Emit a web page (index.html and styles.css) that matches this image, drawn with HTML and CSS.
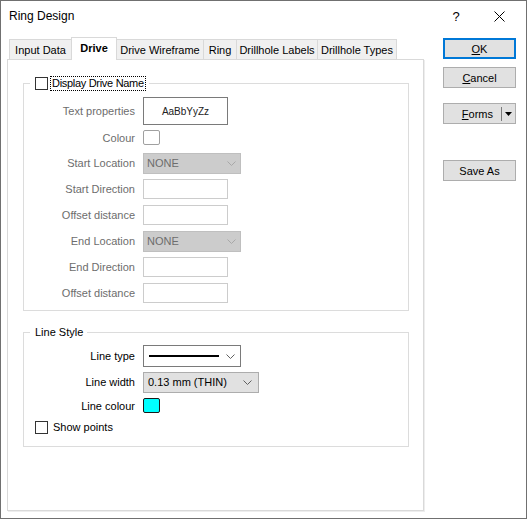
FILE: index.html
```html
<!DOCTYPE html>
<html>
<head>
<meta charset="utf-8">
<title>Ring Design</title>
<link rel="stylesheet" href="styles.css">
</head>
<body>
<div class="window">
  <div class="titlebar">
    <span class="title">Ring Design</span>
    <span class="cap help">?</span>
    <span class="cap close"><svg width="11" height="11" viewBox="0 0 11 11"><path d="M0.5 0.5L10.5 10.5M10.5 0.5L0.5 10.5" stroke="#000" stroke-width="1" fill="none"/></svg></span>
  </div>
  <div class="main">
    <div class="left">
      <div class="tabs">
        <div class="tab w1">Input Data</div>
        <div class="tab w2 active">Drive</div>
        <div class="tab w3">Drive Wireframe</div>
        <div class="tab w4">Ring</div>
        <div class="tab w5">Drillhole Labels</div>
        <div class="tab w6">Drillhole Types</div>
      </div>
      <div class="panel">
        <fieldset class="group g1">
          <legend><span class="legend-in"><span class="cb"></span><span class="focus">Display Drive Name</span></span></legend>
          <div class="form f1">
            <span class="lbl dis">Text properties</span>
            <span class="textprop">AaBbYyZz</span>
            <span class="lbl dis">Colour</span>
            <span class="swatch"></span>
            <span class="lbl dis">Start Location</span>
            <span class="sel-dis">NONE<svg class="chev" width="9" height="5" viewBox="0 0 9 5"><path d="M0.5 0.5L4.5 4.5L8.5 0.5" fill="none" stroke="#a8a8a8"/></svg></span>
            <span class="lbl dis">Start Direction</span>
            <span class="text-dis"></span>
            <span class="lbl dis">Offset distance</span>
            <span class="text-dis"></span>
            <span class="lbl dis">End Location</span>
            <span class="sel-dis">NONE<svg class="chev" width="9" height="5" viewBox="0 0 9 5"><path d="M0.5 0.5L4.5 4.5L8.5 0.5" fill="none" stroke="#a8a8a8"/></svg></span>
            <span class="lbl dis">End Direction</span>
            <span class="text-dis"></span>
            <span class="lbl dis">Offset distance</span>
            <span class="text-dis"></span>
          </div>
        </fieldset>
        <fieldset class="group g2">
          <legend><span class="legend-txt">Line Style</span></legend>
          <div class="form f2">
            <span class="lbl">Line type</span>
            <span class="sel-line"><span class="line"></span><svg class="chev" width="9" height="5" viewBox="0 0 9 5"><path d="M0.5 0.5L4.5 4.5L8.5 0.5" fill="none" stroke="#606060"/></svg></span>
            <span class="lbl">Line width</span>
            <span class="sel-width">0.13 mm (THIN)<svg class="chev" width="9" height="5" viewBox="0 0 9 5"><path d="M0.5 0.5L4.5 4.5L8.5 0.5" fill="none" stroke="#606060"/></svg></span>
            <span class="lbl">Line colour</span>
            <span class="swatch cyan"></span>
            <span class="check-row"><span class="cb"></span><span>Show points</span></span>
          </div>
        </fieldset>
      </div>
    </div>
    <div class="buttons">
      <div class="btn ok"><span><u>O</u>K</span></div>
      <div class="btn cancel"><span><u>C</u>ancel</span></div>
      <div class="btn forms"><span class="forms-lbl"><u>F</u>orms</span><span class="sep"></span><span class="arrow"><svg width="7" height="4" viewBox="0 0 7 4"><path d="M0 0H7L3.5 4Z" fill="#000"/></svg></span></div>
      <div class="btn saveas"><span>Save As</span></div>
    </div>
  </div>
</div>
</body>
</html>
```
FILE: styles.css
```css
* { box-sizing: border-box; }
html, body { margin: 0; padding: 0; background: #fff; }
body {
  font-family: "Liberation Sans", Arial, sans-serif;
  font-size: 11px;
  color: #000;
}
.window {
  width: 527px;
  height: 519px;
  border: 1px solid #707070;
  background: #fff;
}
.titlebar {
  height: 30px;
  display: flex;
  align-items: center;
  padding-right: 7px;
}
.title {
  padding-left: 8px;
  font-size: 12px;
  flex: 1;
}
.cap {
  display: flex;
  justify-content: center;
  align-items: center;
  height: 30px;
}
.help { width: 46px; font-size: 13px; }
.close { width: 40px; }
.main {
  display: flex;
  padding: 6px 0 0 6px;
}
.left { width: 417px; }
.tabs {
  display: flex;
  align-items: flex-end;
  height: 22px;
  padding-left: 2px;
}
.tab {
  height: 20px;
  border: 1px solid #d9d9d9;
  border-bottom: none;
  background: #f0f0f0;
  display: flex;
  align-items: center;
  justify-content: center;
  margin-left: -1px;
  white-space: nowrap;
}
.tab.w1 { width: 63px; margin-left: 0; }
.tab.w2 { width: 46px; }
.tab.w3 { width: 88px; }
.tab.w4 { width: 34px; }
.tab.w5 { width: 82px; }
.tab.w6 { width: 80px; }
.tab.active {
  height: 23px;
  margin-bottom: -1px;
  background: #fff;
  font-weight: bold;
  position: relative;
  z-index: 1;
  padding-bottom: 2px;
}
.panel {
  height: 452px;
  border: 1px solid #d9d9d9;
  box-shadow: 1px 1px 0 #ededed;
  background: #fff;
  padding: 16px 14px 0 15px;
}
.group {
  margin: 0;
  border: 1px solid #dcdcdc;
  padding: 0 6px 4px 6px;
  min-width: 0;
}
.group legend {
  padding: 0 4px 0 5px;
  height: 15px;
  line-height: 15px;
}
.legend-in {
  display: flex;
  align-items: center;
  height: 15px;
}
.cb {
  display: inline-block;
  width: 13px;
  height: 13px;
  border: 1px solid #333;
  background: #fff;
  flex: none;
}
.focus {
  margin-left: 3px;
  padding: 0 1px;
  line-height: 13px;
  outline: 1px dotted #000;
  letter-spacing: -0.3px;
}
.legend-txt { padding-left: 0; }
.form {
  display: grid;
  grid-template-columns: 100px 1fr;
  column-gap: 8px;
  align-items: center;
  padding-left: 5px;
}
.f1 {
  padding-top: 6px;
  grid-template-rows: 28px 25px repeat(6, 26px);
}
.g2 { margin-top: 14px; padding-bottom: 8px; }
.f2 {
  padding-top: 3px;
  grid-template-rows: 26px 26px 21px 22px;
}
.lbl { text-align: right; white-space: nowrap; }
.lbl.dis { color: #6d6d6d; }
.textprop {
  width: 85px;
  height: 28px;
  border: 1px solid #7a7a7a;
  display: flex;
  align-items: center;
  justify-content: center;
  font-size: 10px;
  color: #222;
}
.swatch {
  width: 17px;
  height: 15px;
  border: 1px solid #a0a0a0;
  border-radius: 2px;
  background: #fff;
}
.swatch.cyan {
  background: #00ffff;
  border-color: #1a1a1a;
}
.sel-dis {
  width: 98px;
  height: 21px;
  background: #cccccc;
  border: 1px solid #bfbfbf;
  color: #6d6d6d;
  display: flex;
  align-items: center;
  padding-left: 3px;
  padding-right: 4px;
}
.chev { margin-left: auto; flex: none; }
.text-dis {
  width: 85px;
  height: 20px;
  border: 1px solid #cccccc;
  background: #fff;
}
.sel-line {
  width: 98px;
  height: 22px;
  border: 1px solid #7a7a7a;
  background: #fff;
  display: flex;
  align-items: center;
  padding-left: 5px;
  padding-right: 5px;
}
.line {
  width: 70px;
  height: 2px;
  background: #000;
}
.sel-width {
  width: 116px;
  height: 21px;
  background: #e1e1e1;
  border: 1px solid #adadad;
  display: flex;
  align-items: center;
  padding-left: 4px;
  padding-right: 6px;
}
.check-row {
  grid-column: 1 / -1;
  display: flex;
  align-items: center;
  gap: 5px;
}
.buttons {
  margin-left: 19px;
  width: 73px;
  padding-top: 1px;
  display: flex;
  flex-direction: column;
}
.btn {
  height: 21px;
  border: 1px solid #adadad;
  background: #e1e1e1;
  display: flex;
  align-items: center;
  justify-content: center;
}
.btn.ok { border: 2px solid #0078d7; }
.btn.cancel { margin-top: 8px; }
.btn.forms { margin-top: 15px; justify-content: flex-start; }
.btn.saveas { margin-top: 36px; }
.forms-lbl {
  flex: 1;
  text-align: right;
  padding-right: 8px;
}
.sep {
  width: 1px;
  height: 14px;
  background: #7a7a7a;
}
.arrow {
  width: 13px;
  display: flex;
  justify-content: center;
  align-items: center;
}
```
